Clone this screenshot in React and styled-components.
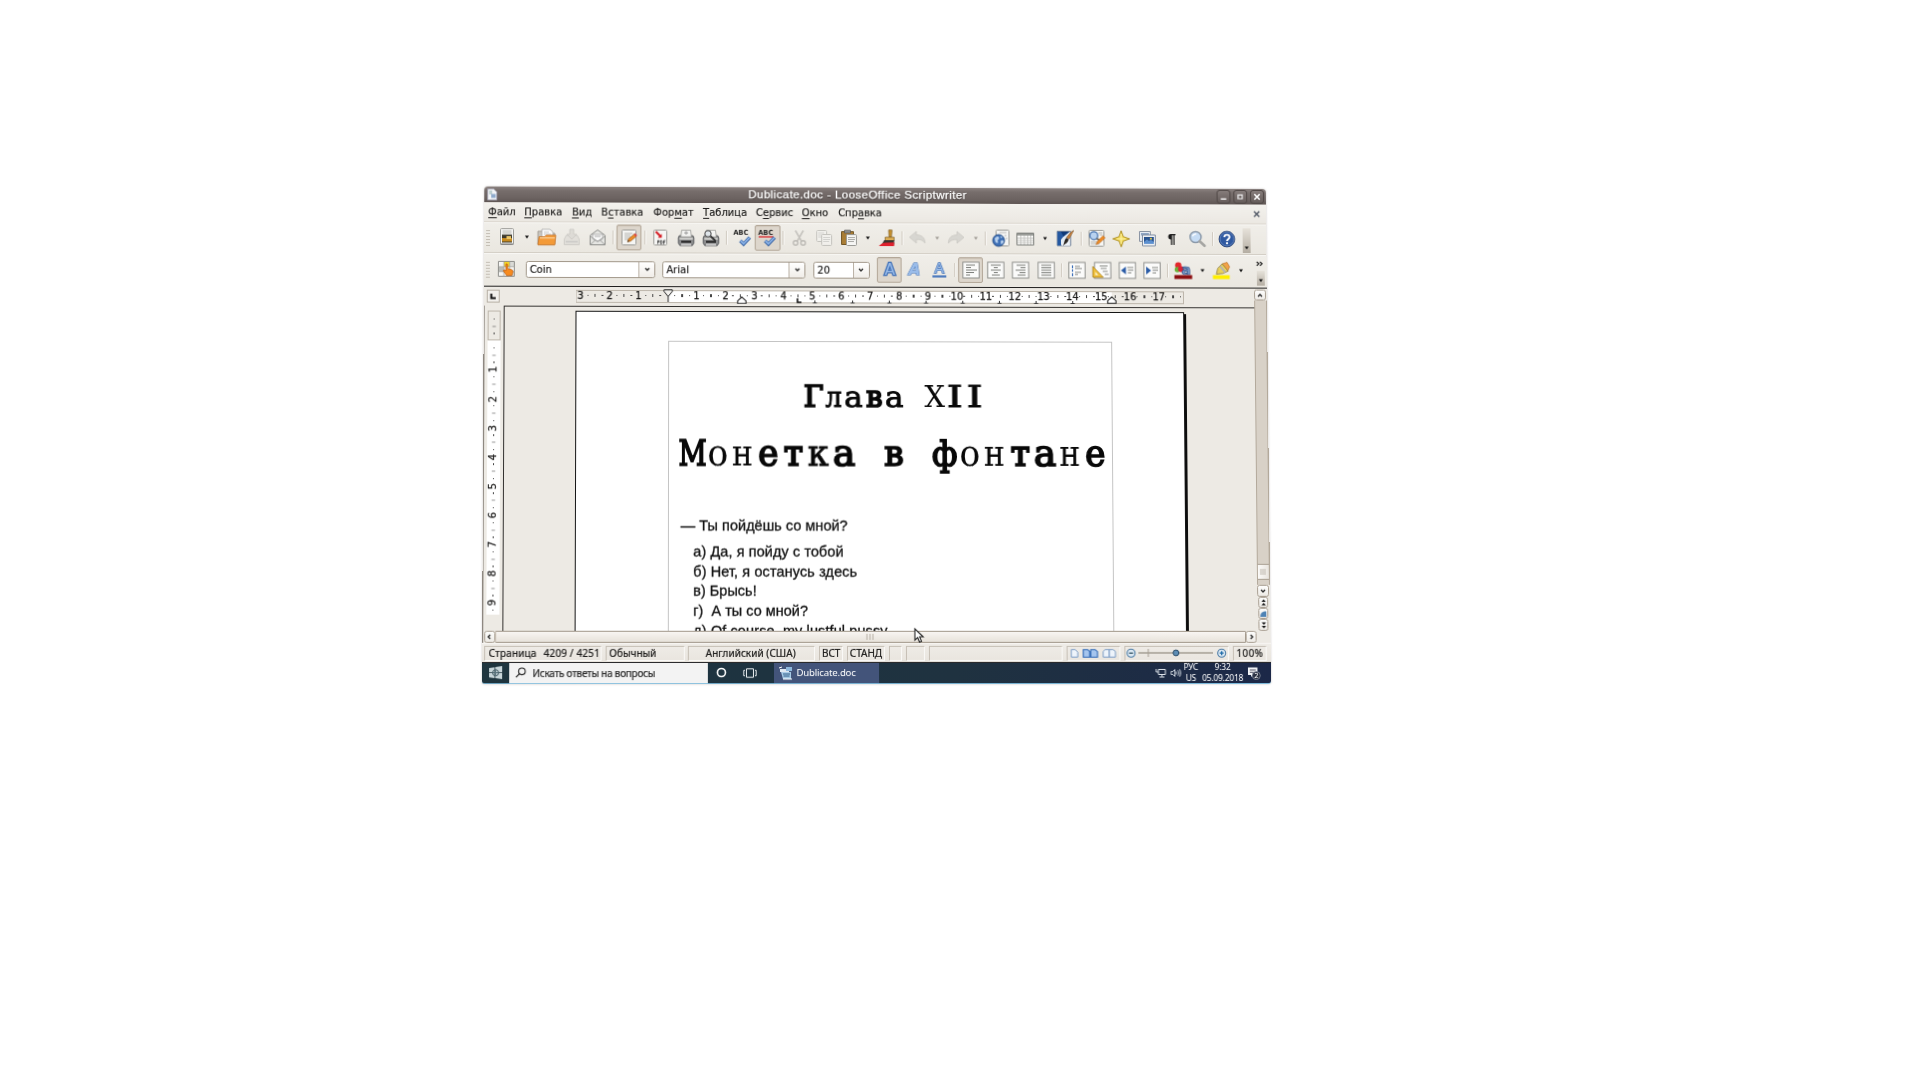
import React from "react";
import styled, { createGlobalStyle, css } from "styled-components";

const W = 789;
const H = 498;

/* The window stands slightly tilted: its four corners, relative to its own box. */
const corners = [
  [2.3, 0.5],
  [783.8, 3],
  [789, 498],
  [0, 498.2],
];

function tilt([[x0, y0], [x1, y1], [x2, y2], [x3, y3]]) {
  const dx1 = x1 - x2, dx2 = x3 - x2, dx3 = x0 - x1 + x2 - x3;
  const dy1 = y1 - y2, dy2 = y3 - y2, dy3 = y0 - y1 + y2 - y3;
  const det = dx1 * dy2 - dx2 * dy1;
  const g = (dx3 * dy2 - dx2 * dy3) / det;
  const h = (dx1 * dy3 - dx3 * dy1) / det;
  const m = [
    (x1 - x0 + g * x1) / W, (y1 - y0 + g * y1) / W, 0, g / W,
    (x3 - x0 + h * x3) / H, (y3 - y0 + h * y3) / H, 0, h / H,
    0, 0, 1, 0,
    x0, y0, 0, 1,
  ];
  return `matrix3d(${m.map((n) => n.toFixed(9)).join(",")})`;
}

const Global = createGlobalStyle`
  *, *::before, *::after { box-sizing: border-box; }
  html, body { margin: 0; background: #fff; }
  svg { display: block; flex: none; }
`;

const Stage = styled.div`
  width: 1920px;
  height: 1080px;
  padding: 186px 0 0 482px;
  overflow: hidden;
  background: #fff;
`;

const Window = styled.div`
  position: relative;
  width: ${W}px;
  height: ${H}px;
  display: flex;
  flex-direction: column;
  transform-origin: 0 0;
  transform: ${tilt(corners)};
  background: #edeae4;
  border-radius: 4px 4px 3px 3px;
  box-shadow: 0 0 2px rgba(60, 50, 45, 0.35);
  font-family: "DejaVu Sans", sans-serif;
  font-size: 10px;
  color: #1b1a19;
  white-space: nowrap;
`;

const TitleBar = styled.div`
  height: 15.5px;
  flex: none;
  display: flex;
  align-items: center;
  padding: 0 2px 0 3px;
  border-radius: 4px 4px 0 0;
  background: linear-gradient(#8b8280 0, #776e6c 25%, #6c6361 70%, #5f5654 100%);
`;
const Title = styled.div`
  flex: 1;
  text-align: center;
  padding: 0 0 3.4px 2px;
  font: 11.6px "Liberation Sans", Arial, sans-serif;
  letter-spacing: 0.43px;
  -webkit-text-stroke: 0.25px #fff;
  color: #fff;
  text-shadow: 0 1px 1px #3d3634;
`;
const WinButton = styled.div`
  width: 14px;
  height: 14px;
  margin-left: 2.8px;
  border-radius: 3px;
  border: 1px solid #4f4745;
  background: linear-gradient(#857c7a, #665d5b);
  display: grid;
  place-items: center;
`;

const MenuBar = styled.div`
  height: 20px;
  flex: none;
  display: flex;
  align-items: center;
  padding: 1px 6px 0 4.1px;
  border-bottom: 1px solid #dcd7cf;
  background: linear-gradient(#f3f1ed, #ebe8e2);
`;
const MenuItem = styled.div`
  width: ${(p) => p.$w}px;
  -webkit-text-stroke: 0.15px #1b1a19;
  u { text-underline-offset: 1.5px; text-decoration-thickness: 1px; }
`;
const Spring = styled.div`
  flex: 1;
`;

const ToolBar = styled.div`
  height: ${(p) => p.$h}px;
  flex: none;
  display: flex;
  align-items: center;
  border-top: 1px solid #f8f7f4;
  border-bottom: 1px solid ${(p) => (p.$last ? "#edeae4" : "#d3cec5")};
  background: linear-gradient(#f0eee9, #eae7e0);
`;
const Handle = styled.div`
  width: 4px;
  height: 17px;
  margin: 0 ${(p) => p.$r}px 0 2px;
  background: radial-gradient(circle, #c4beb4 0.6px, transparent 0.9px) 0 0 / 2px 3px;
`;
const Slot = styled.div`
  width: ${(p) => p.$w || 25.4}px;
  height: 26px;
  flex: none;
  display: grid;
  place-items: center;
  ${(p) => p.$dim && css`opacity: 0.5;`}
  ${(p) => p.$on && css`
    background: #ddd6cc;
    border: 1px solid #b3a798;
    border-radius: 2px;
    box-shadow: inset 0 1px 1px #cfc6ba;
  `}
`;
const Rule = styled.div`
  width: 1px;
  height: 14px;
  background: #d0cac0;
  box-shadow: 1px 0 0 #f9f8f6;
`;
const Overflow = styled.div`
  width: 8px;
  height: ${(p) => p.$h}px;
  margin-left: ${(p) => p.$l || 0}px;
  align-self: flex-end;
  margin-bottom: 1px;
  background: linear-gradient(#e6e2da, #b5aea3);
  display: grid;
  place-items: end center;
  padding-bottom: 3px;
`;
const EndStack = styled.div`
  width: 11px;
  height: 100%;
  margin-right: 1.6px;
  display: flex;
  flex-direction: column;
  align-items: center;
  justify-content: space-between;
  padding-top: 4.5px;
`;

const Combo = styled.div`
  width: ${(p) => p.$w}px;
  height: 17px;
  margin-right: ${(p) => p.$r}px;
  flex: none;
  display: flex;
  align-items: center;
  border: 1px solid #a19789;
  border-radius: 2.5px;
  background: #fff;
  padding-left: 3px;
  -webkit-text-stroke: 0.15px #1b1a19;
`;
const ComboText = styled.div`
  flex: 1;
`;
const ComboArrow = styled.div`
  width: 16px;
  height: 100%;
  border-left: 1px solid #b9b0a4;
  display: grid;
  place-items: center;
  background: linear-gradient(#fff, #f0ede8);
  border-radius: 0 2px 2px 0;
`;

const Work = styled.div`
  height: 345.3px;
  flex: none;
  display: flex;
  border-top: 1.3px solid #1e1d1c;
`;
const WorkMain = styled.div`
  width: 776px;
  display: flex;
  flex-direction: column;
`;
const RulerRow = styled.div`
  height: 19px;
  flex: none;
  display: flex;
  align-items: flex-start;
  padding: 3px 0 0 3px;
`;
const TabCorner = styled.div`
  width: 13px;
  height: 13px;
  margin-right: 76.4px;
  border: 1px solid #b6afa4;
  background: #f2f0ec;
  display: grid;
  place-items: center;
`;
const Ruler = styled.div`
  position: relative;
  width: 612.5px;
  height: 13px;
  display: flex;
  align-items: center;
  padding-bottom: 1.4px;
  border: 1px solid #bdb6ab;
  background: linear-gradient(90deg, #edeae4 0 92px, #fff 92px 539.5px, #edeae4 539.5px);
`;
const RulerSlot = styled.div`
  width: 7.285px;
  flex: none;
  display: flex;
  justify-content: center;
  font-size: 10px;
  line-height: 11px;
  -webkit-text-stroke: 0.25px #1b1a19;
`;
const Dot = styled.i`
  width: 1.3px;
  height: ${(p) => (p.$tall ? 3.4 : 1.4)}px;
  background: #444;
`;
const Marker = styled.div`
  position: absolute;
  left: ${(p) => p.$x}px;
  top: ${(p) => p.$y}px;
`;

const Below = styled.div`
  flex: 1;
  min-height: 0;
  display: flex;
`;
const SideRuler = styled.div`
  width: 19.7px;
  flex: none;
  border-left: 1.4px solid #8e8881;
  padding: 5.6px 0 0 3px;
`;
const SideScale = styled.div`
  width: 12.8px;
  height: 304px;
  display: flex;
  flex-direction: column;
  align-items: center;
  padding-top: 3.6px;
  background: linear-gradient(90deg, #bdb6ab 0 0.8px, transparent 0.8px 12px, #bdb6ab 12px) 0 0 / 100% 28px no-repeat,
    linear-gradient(#edeae4 0 28px, #bdb6ab 28px 28.8px, #fff 28.8px);
  border-top: 1px solid #bdb6ab;
`;
const SideSlot = styled.div`
  height: 7.285px;
  width: 12px;
  flex: none;
  display: flex;
  align-items: center;
  justify-content: center;
  line-height: 10px;
`;
const Turned = styled.span`
  transform: rotate(-90deg);
  -webkit-text-stroke: 0.25px #1b1a19;
`;
const Canvas = styled.div`
  flex: 1;
  min-width: 0;
  overflow: hidden;
  display: flex;
  align-items: flex-start;
  border-left: 1.5px solid #33312f;
  border-top: 1.3px solid #33312f;
  padding: 4.2px 0 0 70.9px;
  background: #edeae4;
`;
const Page = styled.div`
  width: 613px;
  height: 360px;
  flex: none;
  display: flex;
  padding: 29.4px 0 0 92.5px;
  background: #fff;
  border: 1.2px solid #141414;
  border-right-width: 1px;
  box-shadow: 2px 2px 0 #0c0c0c;
`;
const Frame = styled.div`
  width: 447px;
  flex: none;
  border: 1px solid #c4c4c4;
  border-bottom: 0;
`;
const Heading = styled.h1`
  display: flex;
  margin: ${(p) => p.$top}px 0 0 ${(p) => p.$left}px;
  height: ${(p) => p.$h}px;
  font: 400 ${(p) => p.$size}px / ${(p) => p.$h}px "DejaVu Serif", serif;
  color: #080808;
`;
const Letter = styled.span`
  display: flex;
  justify-content: center;
  width: ${(p) => p.$w}px;
  flex: none;
  white-space: pre;
  transform: scaleX(${(p) => p.$stretch || 1});
  -webkit-text-stroke: ${(p) => [0.1, 0.9, 1.7][p.$ink]}px #080808;
`;
const Line = styled.p`
  margin: ${(p) => p.$top || 0}px 0 0 ${(p) => p.$left}px;
  height: 19.8px;
  font: 14.5px / 19.8px "Liberation Sans", Arial, sans-serif;
  letter-spacing: ${(p) => p.$ls || 0}px;
  color: #111;
  -webkit-text-stroke: 0.3px #111;
  white-space: pre;
`;

const ScrollColumn = styled.div`
  width: 12.5px;
  margin-top: 1.4px;
  padding-bottom: 0.2px;
  display: flex;
  flex-direction: column;
`;
const ScrollButton = styled.div`
  width: ${(p) => p.$w || 12}px;
  height: ${(p) => p.$h || 11.5}px;
  flex: none;
  align-self: center;
  border: 1px solid #a99f92;
  border-radius: 2.5px;
  background: linear-gradient(#fdfdfc, #eeebe6);
  display: grid;
  place-items: center;
`;
const Track = styled.div`
  flex: 1;
  display: flex;
  flex-direction: column;
  justify-content: flex-end;
  padding-bottom: 5px;
  background: #d8d1c7;
  border: solid #b3a99b;
  border-width: 0 1px;
`;
const Thumb = styled.div`
  height: 16px;
  border: solid #a99f92;
  border-width: 1px 0;
  background: linear-gradient(90deg, #fbfaf8, #e9e5df);
  display: grid;
  place-items: center;
`;

const HScroll = styled.div`
  height: 12px;
  flex: none;
  display: flex;
  align-items: center;
  padding-left: 1px;
  border-left: 1.4px solid #8e8881;
`;
const HThumb = styled.div`
  flex: 1;
  height: 12px;
  padding-right: 3px;
  border: 1px solid #a1978a;
  border-left-color: #d2cabf;
  background: linear-gradient(#f8f5f2, #e7e2da);
  display: grid;
  place-items: center;
`;
const Corner = styled.div`
  width: 14px;
  flex: none;
`;

const StatusBar = styled.div`
  height: 18.7px;
  flex: none;
  display: flex;
  align-items: center;
  gap: 3.8px;
  padding: 1px 3px 0 2.2px;
  border-top: 1px solid #f7f5f2;
  background: linear-gradient(#efece7, #e9e5de);
  font: 10px "Noto Sans", "Open Sans", sans-serif;
`;
const StatusCell = styled.div`
  width: ${(p) => p.$w}px;
  height: 15px;
  flex: none;
  display: flex;
  align-items: center;
  gap: ${(p) => p.$gap || 0}px;
  justify-content: ${(p) => (p.$start ? "flex-start" : "center")};
  padding-left: ${(p) => p.$pl || 0}px;
  border: 1px solid;
  border-color: #c6bfb5 #faf9f7 #faf9f7 #c6bfb5;
  -webkit-text-stroke: 0.2px #1b1a19;
  letter-spacing: ${(p) => p.$ls || 0}px;
`;

const TaskBar = styled.div`
  flex: 1;
  min-height: 0;
  display: flex;
  align-items: stretch;
  border-top: 1px solid #2a2a2c;
  border-bottom: 1px solid #7ebbdc;
  border-radius: 0 0 3px 3px;
  background: linear-gradient(90deg, #1f353e, #1d3440 12%, #1f3240 60%, #1c2848);
  color: #fff;
  font: 9.6px "Noto Sans", "Open Sans", sans-serif;
`;
const Start = styled.div`
  width: 27.2px;
  display: grid;
  place-items: center;
`;
const Search = styled.div`
  width: 198.2px;
  display: flex;
  align-items: center;
  padding-left: 6px;
  gap: 6px;
  color: #2a2a2a;
  background: #f3f3f3;
  font-size: 10px;
  letter-spacing: -0.27px;
  -webkit-text-stroke: 0.2px #2a2a2a;
`;
const TaskIcon = styled.div`
  width: ${(p) => p.$w}px;
  display: grid;
  place-items: center;
`;
const TaskButton = styled.div`
  width: 105px;
  margin-left: 10px;
  display: flex;
  align-items: center;
  gap: 3.5px;
  padding-left: 5px;
  letter-spacing: -0.18px;
  background: #43547a;
`;
const Tray = styled.div`
  margin-left: auto;
  display: flex;
  align-items: center;
  padding-right: 9.6px;
`;
const TrayText = styled.div`
  width: ${(p) => p.$w}px;
  margin-left: ${(p) => p.$l}px;
  text-align: center;
  line-height: 10.4px;
  font-size: 8.4px;
  letter-spacing: -0.15px;
`;
const TrayIcon = styled.div`
  margin-left: ${(p) => p.$l || 0}px;
`;
const Pointer = styled.div`
  position: absolute;
  left: 431px;
  top: 442px;
`;

/* ---------- icons ---------- */
const Svg = ({ w = 18, h = 18, vb, children }) => (
  <svg width={w} height={h} viewBox={vb || `0 0 ${w} ${h}`} fill="none">{children}</svg>
);
const Caret = ({ c = "#111" }) => (
  <Svg w={6} h={4}><path d="M1 .5h4L3 3.4z" fill={c} /></Svg>
);
const Chevron = ({ r = 0, s = 6 }) => (
  <svg width={s} height={s} viewBox="0 0 6 6" fill="none">
    <path d="M1 2l2 2 2-2" stroke="#222" strokeWidth="1.3" transform={`rotate(${r} 3 3)`} />
  </svg>
);
const Sheet = ({ x = 2, y = 1, w = 14, h = 16 }) => (
  <rect x={x + 0.5} y={y + 0.5} width={w - 1} height={h - 1} rx="1" fill="#f6f6f4" stroke="#9b9b97" />
);

const NewDoc = () => (
  <Svg><Sheet y={0} h={17} /><path d="M4.5 3h9M4.5 5h9" stroke="#b5b5b0" /><path d="M4 6.5h10v8H4z" fill="#3e3a2c" /><path d="M4 10h10v3.5H4z" fill="#c78a1e" /><path d="M8.5 8h4.5v3H8.5z" fill="#eac568" /><path d="M2.5 16h13" stroke="#777" /></Svg>
);
const OpenFolder = () => (
  <Svg w={20} h={18}><path d="M1 16V3h5l1.5 2H18v11z" fill="#c9c6c0" stroke="#9c958a" strokeWidth=".8" /><path d="M5 1h8l3 2.5V10H5z" fill="#fafafa" stroke="#aaa" strokeWidth=".8" /><path d="M7 4h5M7 6h7" stroke="#bbb" strokeWidth=".8" /><path d="M1 16.8L2.2 8.5H8l1.3-1.6H19L18 16.8z" fill="#f39a38" stroke="#c4742a" strokeWidth=".8" /><path d="M3 9.7h15" stroke="#fbcb8e" strokeWidth="1.4" /></Svg>
);
const Save = () => (
  <Svg><path d="M1.5 11l2-4h11l2 4v5.5h-15z" fill="#d8d6d2" stroke="#a5a39f" strokeWidth=".8" /><path d="M7 1h4v5h3l-5 5-5-5h3z" fill="#cfcdc8" stroke="#a7a5a1" strokeWidth=".8" /><path d="M3 13.5h12" stroke="#aaa" strokeWidth="1.5" /></Svg>
);
const Mail = () => (
  <Svg><path d="M1.5 7L9 1.5 16.5 7v9.5h-15z" fill="#e6e6e3" stroke="#8c8d8a" strokeWidth="1" /><path d="M4 6h10v4.5l-5 3-5-3z" fill="#fafafa" stroke="#999" strokeWidth=".7" /><path d="M6 8h6" stroke="#aaa" /><path d="M1.7 8l7.3 5 7.3-5M1.8 16.3L7 11.5M16.2 16.3L11 11.5" stroke="#999a97" strokeWidth=".9" /></Svg>
);
const EditDoc = () => (
  <Svg><Sheet x={1} w={15} /><path d="M4 5h8M4 7h6M4 9h7M4 11h4" stroke="#b4b4b0" /><path d="M7 13.5l1.3-3.2 5.5-4.6 2 2.2-5.6 4.8z" fill="#ef8c26" stroke="#8c5a22" strokeWidth=".7" /><path d="M13.4 6l1.4-1.2 2 2.1-1.4 1.3z" fill="#d44" /><path d="M7 13.5l.9-1.7 1 1z" fill="#222" /></Svg>
);
const Pdf = () => (
  <Svg><Sheet /><path d="M4.5 3l5 5" stroke="#d41f26" strokeWidth="2.1" /><path d="M10.5 9.2V5.2L6.5 9.2z" fill="#d41f26" /><path d="M6.5 15.5v-3.5h1.3v1.6H6.5M9.3 15.3V12h.8c1.4 0 1.4 3.3 0 3.3zM12.5 15.7V12h1.8M12.5 13.7h1.4" stroke="#444" strokeWidth=".9" /></Svg>
);
const Printer = ({ lens }) => (
  <Svg><path d="M1.2 9l1-2h13.6l1 2v5.5L15.3 17H2.7l-1.5-2.5z" fill="#8b8c8d" stroke="#55575a" strokeWidth=".9" /><path d="M4.5 1.5h9l.8 6.8H3.7z" fill="#f4f4f2" stroke="#8c8c89" strokeWidth=".7" /><path d="M2.3 9.3h13.4v1.6H2.3z" fill="#dededb" /><path d="M4 13.2h10" stroke="#1d1d1d" strokeWidth="1.8" /><path d="M4 16h10" stroke="#e2e2e2" strokeWidth="1.4" />
    {lens ? <><circle cx="6" cy="5" r="3.2" fill="#dfe5ea" stroke="#444" /><path d="M8.5 7.5l5 4.5" stroke="#333" strokeWidth="1.8" /></> : <path d="M7 4.2h4M9 2.4v3.6" stroke="#999" />}
  </Svg>
);
const Abc = ({ line }) => (
  <Svg w={20} h={18}>
    <text x=".5" y="6.5" fontSize="7" fontWeight="700" fontFamily="DejaVu Sans" textLength="15" lengthAdjust="spacingAndGlyphs" fill="#222">ABC</text>
    {line && <path d="M1 8h15" stroke="#d8262c" strokeWidth="1.3" />}
    <path d="M7.5 12l3.3 3.3L17 8.6" stroke="#2b5aa0" strokeWidth="3.4" /><path d="M7.7 12l3.1 3 6-6.3" stroke="#8db4e8" strokeWidth="1.8" />
  </Svg>
);
const Cut = () => (
  <Svg><path d="M5 1.5l6.3 11M13 1.5L6.7 12.5" stroke="#9f9d99" strokeWidth="1.6" /><circle cx="5.2" cy="14" r="2.3" stroke="#8f8d89" strokeWidth="1.4" /><circle cx="12.8" cy="14" r="2.3" stroke="#8f8d89" strokeWidth="1.4" /></Svg>
);
const Copy = () => (
  <Svg><Sheet x={1} y={1} w={11} h={12} /><path d="M3 4h6M3 6h4M3 8h4" stroke="#bbb" /><Sheet x={6} y={5} w={11} h={12} /><path d="M8 8.5h7M8 10.5h7M8 12.5h6" stroke="#bbb" /></Svg>
);
const Paste = () => (
  <Svg><path d="M1.5 2.5h12v13h-12z" fill="#a97d35" stroke="#6f5322" /><path d="M4.5 1h6v3h-6z" fill="#8e8e8a" stroke="#555" strokeWidth=".6" /><Sheet x={6} y={5} w={11} h={12} /><path d="M8 8.5h7M8 10.5h7M8 12.5h6" stroke="#a9a9a5" /></Svg>
);
const Brush = () => (
  <Svg><path d="M11 .8h3.4l-.6 7h-2.4z" fill="#c9932f" stroke="#7d5a1c" strokeWidth=".7" /><path d="M7.5 8h9v3.5h-9z" fill="#dcae55" stroke="#7d5a1c" strokeWidth=".7" /><path d="M6.5 11h10v4.5H4z" fill="#39332f" /><path d="M1 17c3-3 5.5-4 9-3.5l6.5-.2V17z" fill="#e0202d" /></Svg>
);
const Undo = ({ flip }) => (
  <Svg><g transform={flip ? "translate(18 0) scale(-1 1)" : ""}><path d="M1 8l7-6v3.6c5 0 8.7 2.4 8.7 8.4-2-3.2-4.7-3.8-8.7-3.8V14z" fill="#c3c2be" stroke="#aaa8a3" strokeWidth=".8" /></g></Svg>
);
const Globe = () => (
  <Svg><Sheet x={4} y={0} w={14} h={17} /><path d="M8 3h7M13 6h2M14 9h2" stroke="#bbb" /><circle cx="7" cy="11" r="6" fill="#3d6fb5" stroke="#22477f" strokeWidth=".8" /><path d="M3 9c2-2.5 4-2.5 4.5-.7s-2.3 2-1.2 3.6-1.5 2.6-2.7.3zM9 11.5c2-1.4 3.4-.4 3 .9s-1.8 2.3-2.7 2.3zM8.5 6.5l2.5.8-1.5 1.4z" fill="#b7d0ee" /></Svg>
);
const Table = () => (
  <Svg><path d="M.5 3.5h17v12H.5z" fill="#fafaf8" stroke="#7d7f7b" /><path d="M1 4h16v2H1z" fill="#9a9c98" /><path d="M1 8.5h16M1 10.8h16M1 13.1h16M4.5 6v9M8 6v9M11.5 6v9M14.5 6v9" stroke="#bdbdb9" strokeWidth=".8" /></Svg>
);
const Draw = () => (
  <Svg><path d="M1.2 1.5h13.6v14.5H1.2z" fill="#e4ecf5" stroke="#6f8099" /><path d="M1.5 2h12L7 7.5 5 10v6H1.5z" fill="#2458a0" /><path d="M5 2h8.5L7.5 6.8C6.5 5 6 3.5 5 2z" fill="#0f3a78" /><path d="M6 13.5c3-1 5-3.5 8-9V16H6z" fill="#eef3f9" /><path d="M14.5 3L18 .5l-4.8 8.7-2.5-1.5z" fill="#c9823c" stroke="#7d5122" strokeWidth=".6" /><path d="M10.5 8.2l2.3 1.4c-.2 3-2.8 4.8-6 6.3 2-2.5 1.2-5.5 3.7-7.7z" fill="#2b2622" /></Svg>
);
const Find = () => (
  <Svg><Sheet x={1} y={0} w={16} h={17} /><path d="M3 12h7M3 14h9M11 3h4M12 5h3" stroke="#b4b4b0" /><circle cx="6.3" cy="5.8" r="4" fill="#b8d2f0" stroke="#4a76b0" strokeWidth="1.3" /><path d="M9 8.5l4.5 3" stroke="#666" strokeWidth="1.8" /><path d="M8.5 14.8l1.2-3L15.5 6l2.2 2-6 5.6z" fill="#ef8c26" stroke="#b45f14" strokeWidth=".6" /></Svg>
);
const Navigator = () => (
  <Svg><path d="M9 .8l2.2 6L17.5 9l-6.3 2.2L9 17.2l-2.2-6L.5 9l6.3-2.2z" fill="#f3d956" stroke="#a98a1c" strokeWidth=".9" strokeLinejoin="round" /><path d="M9 4v10M4.5 9h9" stroke="#fdf4ac" strokeWidth="1" /></Svg>
);
const Gallery = () => (
  <Svg><path d="M1.5 1.5h11v10h-11z" fill="#e6ebf2" stroke="#8a94a3" /><path d="M3 3h8v2.5H3z" fill="#8fa6c4" /><path d="M4.5 5h13v11h-13z" fill="#f4f5f7" stroke="#7d8ba0" /><path d="M6 7h10v7H6z" fill="#28538f" /><path d="M6 12l3-2.5 2 1.5 2-1 3 2v2H6z" fill="#5b8fcf" /><circle cx="13" cy="8.8" r="1" fill="#f2d64c" /></Svg>
);
const ZoomGlass = () => (
  <Svg><circle cx="7.3" cy="7" r="5.6" fill="#c6dcf4" stroke="#8b99a9" strokeWidth="1.5" /><path d="M4.3 6.3c.6-1.8 2-2.5 3.8-2.4" stroke="#fff" strokeWidth="1.2" /><path d="M11.5 11.2l4.8 4.6" stroke="#a5a5a2" strokeWidth="2.6" strokeLinecap="round" /></Svg>
);
const Help = () => (
  <Svg><circle cx="9" cy="9" r="7.9" fill="#2f59a1" stroke="#1d3a70" strokeWidth=".9" /><circle cx="9" cy="9" r="6.9" stroke="#6a8cc4" strokeWidth=".7" /><path d="M6.4 7c0-3.2 5.3-3.2 5.3 0 0 1.9-2.6 1.9-2.6 3.9" stroke="#fff" strokeWidth="1.9" /><circle cx="9.1" cy="13.2" r="1.1" fill="#fff" /></Svg>
);
const Styles = () => (
  <Svg><path d="M.5 1.5h16v15H.5z" fill="#f6f6f4" stroke="#8e8e8a" /><path d="M6 2h6v5H6z" fill="#f4d425" /><path d="M1 7h5v5H1z" fill="#b9bbb7" /><path d="M12 2h4v5h-4zM12 12h4v4h-4z" fill="#d9dad6" /><path d="M.5 6.8h16M.5 11.8h16M6 1.5v15M11.8 1.5v15" stroke="#a5a5a1" strokeWidth=".8" /><path d="M8 4.2c1.2-.6 1.8.2 1.8 1v3.5l4.2 1.2c1.3.5 1.2 2 .8 3.4l-.8 2.5H8.8L5.5 11c0-1.2 1.3-1.2 2.5 0z" fill="#f78b1f" stroke="#b9570c" strokeWidth=".7" /></Svg>
);
/* Glyph buttons: a light blue capital with a darker rim. */
const BigA = ({ slant, line }) => (
  <Svg>
    <text
      x="9" y={line ? 12 : 14.5} textAnchor="middle" fontSize={line ? 14 : 15.5}
      fontStyle={slant ? "italic" : "normal"} fontWeight={slant ? 700 : 400} fontFamily="DejaVu Sans"
      fill="#9abce9" stroke="#4473b8" strokeWidth={slant ? 0.9 : line ? 1.4 : 2.6} paintOrder="stroke"
    >A</text>
    {line && <path d="M2 15.5h14" stroke="#4a78bd" strokeWidth="2.2" />}
  </Svg>
);
const Align = ({ rows }) => (
  <Svg><rect x=".8" y="1" width="16.4" height="16" fill="#fbfbfa" stroke="#8d8e8a" />
    {rows.map(([a, b], i) => <path key={i} d={`M${a} ${4 + i * 2.5}H${b}`} stroke="#6b6d69" strokeWidth=".9" />)}
  </Svg>
);
const NumList = () => (
  <Svg><rect x=".8" y="1" width="16.4" height="16" fill="#fbfbfa" stroke="#8d8e8a" /><path d="M4.5 4v3M4.5 8v2.4M4.5 12v3" stroke="#3c6fb8" strokeWidth="1.2" /><path d="M7 5h5M7 7.2h7M7 11h6M7 13.2h3" stroke="#8a8c88" /></Svg>
);
const Bullets = () => (
  <Svg w={20} h={18}><rect x="2.8" y="1" width="16.4" height="16" fill="#fbfbfa" stroke="#8d8e8a" /><path d="M8 4.5h8M9 7h6M11 10h5M13 13h4" stroke="#8a8c88" /><path d="M1 5l10.5 11H1z" fill="#efc03c" stroke="#a87c14" strokeWidth=".8" /><path d="M3.5 10.5l3 3.2h-3z" fill="#fbf3d2" /></Svg>
);
const Indent = ({ out }) => (
  <Svg><rect x=".8" y="1" width="16.4" height="16" fill="#fbfbfa" stroke="#8d8e8a" /><path d={out ? "M7.5 5v8L2.5 9z" : "M3 5v8l5-4z"} fill="#2a5ba6" /><path d="M9 6h6M9.5 8.7h5.5M9.5 11.4h3.5" stroke="#777975" strokeWidth=".9" /></Svg>
);
const FontColor = () => (
  <Svg w={19} h={18}><circle cx="4.5" cy="3.8" r="3.2" fill="#e3262b" /><circle cx="3.6" cy="8" r="2.8" fill="#6bb43a" /><circle cx="7.2" cy="7.4" r="3" fill="#d23" /><text x="12.5" y="12.8" textAnchor="middle" fontSize="14" fontWeight="700" fontFamily="DejaVu Sans" fill="#7898c8" stroke="#2f4f86" strokeWidth=".7">a</text><path d="M.5 13.5h18v4H.5z" fill="#8c0f12" /></Svg>
);
const Highlight = () => (
  <Svg><path d="M10 2l5-1.5L17.5 5l-2 4.5z" fill="#f2a24a" stroke="#b5691c" strokeWidth=".6" /><path d="M4 12.5l1.5-6L10 2l6 7.3-5.5 2.5z" fill="#e9d15a" stroke="#8c7a3c" strokeWidth=".8" /><path d="M8 4.5l5 6" stroke="#b5b5b0" strokeWidth="2" /><path d="M.5 13.5h17v4H.5z" fill="#ffef00" /></Svg>
);

const R = {
  left: [[4, 13], [4, 9], [4, 15], [4, 12], [4, 8]],
  center: [[4, 14], [7, 11], [4, 14], [7, 11], [5, 13]],
  right: [[5, 14], [9, 14], [4, 14], [8, 14], [6, 14]],
  full: [[4, 14], [4, 14], [4, 14], [4, 14], [4, 14]],
};

const Sep = ({ w = 6.5 }) => <Slot $w={w}><Rule /></Slot>;

const ticks = (before, last) => {
  const out = [];
  for (let n = -before; n <= last; n++) out.push(n === 0 ? "" : Math.abs(n), ".", "|", ".");
  return out;
};

/* Typewriter headings: letter, ink weight, horizontal stretch. */
const ink1 = [["Г", 2, 1.05], ["л", 1, 0.9], ["а", 1, 1.08], ["в", 2, 1.02], ["а", 1, 1.08], [" ", 0], ["X", 0, 1], ["I", 1, 1.4], ["I", 1, 1.4]];
const ink2 = [
  ["М", 2, 0.8], ["о", 0, 1], ["н", 0, 0.92], ["е", 2, 1], ["т", 2, 1.04], ["к", 1, 0.98], ["а", 2, 1.1], [" ", 0], ["в", 2, 1.02], [" ", 0],
  ["ф", 2, 0.95], ["о", 0, 1], ["н", 0, 0.92], ["т", 2, 1.04], ["а", 2, 1.1], ["н", 0, 0.92], ["е", 2, 1],
];

const stops = [238.6, 276, 313.3, 350.3, 387.3, 424.5, 461.5, 498.5];

export default function App() {
  return (
    <Stage>
      <Global />
      <Window>
        <TitleBar>
          <Svg w={10} h={12}><path d="M.5.5h6l3 3v8h-9z" fill="#f3f5f7" stroke="#aab" strokeWidth=".8" /><path d="M2 3h3M2 5h3" stroke="#8aa" /><rect x="4" y="5.5" width="4.5" height="4" fill="#8fabcd" /></Svg>
          <Title>Dublicate.doc - LooseOffice Scriptwriter</Title>
          <WinButton><Svg w={8} h={8}><path d="M1.2 6.3h5.6" stroke="#fff" strokeWidth="1.4" /></Svg></WinButton>
          <WinButton><Svg w={8} h={8}><path d="M2 2.2h4v3.8H2z" stroke="#eee" strokeWidth="1.2" /></Svg></WinButton>
          <WinButton><Svg w={8} h={8}><path d="M1.3 1.3l5.4 5.4M6.7 1.3L1.3 6.7" stroke="#fff" strokeWidth="1.6" /></Svg></WinButton>
        </TitleBar>

        <MenuBar>
          <MenuItem $w={36.2}><u>Ф</u>айл</MenuItem>
          <MenuItem $w={47.9}><u>П</u>равка</MenuItem>
          <MenuItem $w={29.4}><u>В</u>ид</MenuItem>
          <MenuItem $w={52.5}>В<u>с</u>тавка</MenuItem>
          <MenuItem $w={50}>Фор<u>м</u>ат</MenuItem>
          <MenuItem $w={53.3}><u>Т</u>аблица</MenuItem>
          <MenuItem $w={46.2}>С<u>е</u>рвис</MenuItem>
          <MenuItem $w={36.6}><u>О</u>кно</MenuItem>
          <MenuItem $w={50}>Спр<u>а</u>вка</MenuItem>
          <Spring />
          <Svg w={7} h={7}><path d="M.8.8l5.4 5.4M6.2.8L.8 6.2" stroke="#4a5260" strokeWidth="1.3" /></Svg>
        </MenuBar>

        <ToolBar $h={31.5}>
          <Handle $r={4.5} />
          <Slot><NewDoc /></Slot><Slot $w={14.5}><Caret /></Slot>
          <Slot><OpenFolder /></Slot>
          <Slot $dim><Save /></Slot>
          <Slot><Mail /></Slot>
          <Sep />
          <Slot $w={25.2} $on><EditDoc /></Slot>
          <Sep />
          <Slot $w={25.2}><Pdf /></Slot><Slot><Printer /></Slot><Slot><Printer lens /></Slot>
          <Sep />
          <Slot $w={25}><Abc /></Slot><Slot $on><Abc line /></Slot>
          <Sep />
          <Slot $dim><Cut /></Slot><Slot $w={25} $dim><Copy /></Slot>
          <Slot $w={25}><Paste /></Slot><Slot $w={13}><Caret /></Slot>
          <Slot><Brush /></Slot>
          <Sep w={6} />
          <Slot $w={25} $dim><Undo /></Slot><Slot $w={14}><Caret c="#a09c95" /></Slot>
          <Slot $w={25} $dim><Undo flip /></Slot><Slot $w={14}><Caret c="#a09c95" /></Slot>
          <Sep w={6} />
          <Slot $w={25}><Globe /></Slot>
          <Slot $w={25.2}><Table /></Slot><Slot $w={14.4}><Caret /></Slot>
          <Slot><Draw /></Slot>
          <Sep />
          <Slot><Find /></Slot><Slot><Navigator /></Slot><Slot><Gallery /></Slot>
          <Slot><Svg><path d="M8 4h5v1.2h-1V15h-1.2V5.2H9.6V15H8.3V9.6C4.8 9.6 4.8 4 8 4z" fill="#1a1a1a" /></Svg></Slot>
          <Slot><ZoomGlass /></Slot>
          <Sep />
          <Slot $w={23}><Help /></Slot>
          <Overflow $h={25} $l={4.4}><Caret /></Overflow>
        </ToolBar>

        <ToolBar $h={32.6} $last>
          <Handle $r={4.3} />
          <Slot $w={25}><Styles /></Slot>
          <Slot $w={6.6} />
          <Combo $w={130.3} $r={7.1}><ComboText>Coin</ComboText><ComboArrow><Chevron /></ComboArrow></Combo>
          <Combo $w={144.2} $r={7.6}><ComboText>Arial</ComboText><ComboArrow><Chevron /></ComboArrow></Combo>
          <Combo $w={56.8} $r={7.4}><ComboText>20</ComboText><ComboArrow><Chevron /></ComboArrow></Combo>
          <Slot $w={24.9} $on><BigA /></Slot>
          <Slot $w={25}><BigA slant /></Slot>
          <Slot $w={25}><BigA line /></Slot>
          <Sep w={7} />
          <Slot $w={25} $on><Align rows={R.left} /></Slot>
          <Slot><Align rows={R.center} /></Slot>
          <Slot><Align rows={R.right} /></Slot>
          <Slot $w={25.2}><Align rows={R.full} /></Slot>
          <Sep w={6.2} />
          <Slot><NumList /></Slot><Slot $w={25.6}><Bullets /></Slot><Slot><Indent out /></Slot><Slot $w={25.2}><Indent /></Slot>
          <Sep w={6} />
          <Slot $w={25}><FontColor /></Slot><Slot $w={14.4}><Caret /></Slot>
          <Slot $w={24.4}><Highlight /></Slot><Slot $w={14.4}><Caret /></Slot>
          <Spring />
          <EndStack>
            <Svg w={8} h={6}><path d="M1 .8l2 2-2 2M4.3.8l2 2-2 2" stroke="#111" strokeWidth="1.2" /></Svg>
            <Overflow $h={15} $l={3}><Caret /></Overflow>
          </EndStack>
        </ToolBar>

        <Work>
          <WorkMain>
            <RulerRow>
              <TabCorner><Svg w={7} h={7}><path d="M1.5 1v4.5H6" stroke="#111" strokeWidth="2" /></Svg></TabCorner>
              <Ruler>
                {ticks(3, 17).map((t, i) => (
                  <RulerSlot key={i}>{t === "." ? <Dot /> : t === "|" ? <Dot $tall /> : t}</RulerSlot>
                ))}
                <Marker $x={86.8} $y={-1.4}><Svg w={10} h={13}><path d="M.8.8h8.4v1.5L5 7.5.8 2.3zM5 7.5V13" fill="#f4f2ee" stroke="#222" strokeWidth="1" /></Svg></Marker>
                <Marker $x={161} $y={5}><Svg w={10} h={8}><path d="M5 .8L9.2 4.7v2.5H.8V4.7z" fill="#fff" stroke="#222" strokeWidth="1.1" /></Svg></Marker>
                <Marker $x={533.6} $y={4.6}><Svg w={10} h={8}><path d="M5 .8L9.2 4.7v2.5H.8V4.7z" fill="#fff" stroke="#222" strokeWidth="1.1" /></Svg></Marker>
                <Marker $x={221} $y={7}><Svg w={6} h={5}><path d="M1 0v4h4" stroke="#111" strokeWidth="1.6" /></Svg></Marker>
                {stops.map((x) => (
                  <Marker key={x} $x={x - 1.5} $y={9.3}><Svg w={5} h={3}><path d="M.5 2.5h4M2.5 0v3" stroke="#333" /></Svg></Marker>
                ))}
              </Ruler>
            </RulerRow>
            <Below>
              <SideRuler>
                <SideScale>
                  {[".", "|", ".", ...ticks(0, 9).slice(0, 38)].map((t, i) => (
                    <SideSlot key={i}>{t === "." ? <Dot /> : t === "|" ? <Turned><Svg w={1} h={4}><path d="M.5 0v4" stroke="#333" /></Svg></Turned> : <Turned>{t}</Turned>}</SideSlot>
                  ))}
                </SideScale>
              </SideRuler>
              <Canvas>
                <Page>
                  <Frame>
                    <Heading $top={37} $left={134.8} $h={36} $size={29}>
                      {ink1.map(([c, k, s], i) => <Letter key={i} $w={20.3} $ink={k} $stretch={s}>{c}</Letter>)}
                    </Heading>
                    <Heading $top={17.8} $left={10.8} $h={43} $size={34.5}>
                      {ink2.map(([c, k, s], i) => <Letter key={i} $w={25.3} $ink={k} $stretch={s}>{c}</Letter>)}
                    </Heading>
                    <Line $top={40.7} $left={11.6} $ls={0.03}>— Ты пойдёшь со мной?</Line>
                    <Line $top={6.4} $left={24.2} $ls={0.08}>а) Да, я пойду с тобой</Line>
                    <Line $left={24.2} $ls={0.1}>б) Нет, я останусь здесь</Line>
                    <Line $left={24.2}>в) Брысь!</Line>
                    <Line $left={24.2}>г)  А ты со мной?</Line>
                    <Line $left={24.2} $ls={0.1}>д) Of course, my lustful pussy</Line>
                  </Frame>
                </Page>
              </Canvas>
            </Below>
          </WorkMain>
          <ScrollColumn>
            <ScrollButton><Chevron r={180} /></ScrollButton>
            <Track><Thumb><Svg w={6} h={6}><path d="M0 1h6M0 3h6M0 5h6" stroke="#b1a99e" strokeWidth=".8" /></Svg></Thumb></Track>
            <ScrollButton><Chevron /></ScrollButton>
            <ScrollButton $w={10} $h={11.3}><Svg w={5} h={7}><path d="M.3 3l2.2-2.6L4.7 3zM.3 6.6L2.5 4l2.2 2.6z" fill="#111" /></Svg></ScrollButton>
            <ScrollButton $w={10} $h={11.3}><Svg w={6} h={6}><path d="M0 6c0-4 2-5.5 6-5.5V6z" fill="#4e83b5" /></Svg></ScrollButton>
            <ScrollButton $w={10} $h={11.3}><Svg w={5} h={7}><path d="M.3.4h4.4L2.5 3zM.3 4h4.4L2.5 6.6z" fill="#111" /></Svg></ScrollButton>
          </ScrollColumn>
        </Work>

        <HScroll>
          <ScrollButton $w={10.5}><Chevron r={90} /></ScrollButton>
          <HThumb><Svg w={8} h={6}><path d="M1 0v6M4 0v6M7 0v6" stroke="#b1a99e" strokeWidth=".9" /></Svg></HThumb>
          <ScrollButton $w={11}><Chevron r={-90} /></ScrollButton>
          <Corner />
        </HScroll>

        <StatusBar>
          <StatusCell $w={116.6} $start $pl={3.4} $gap={7} $ls={0.12}><span>Страница</span><span>4209 / 4251</span></StatusCell>
          <StatusCell $w={79} $start $pl={3}>Обычный</StatusCell>
          <StatusCell $w={127} $start $pl={16.4} $ls={0.04}>Английский (США)</StatusCell>
          <StatusCell $w={24}>ВСТ</StatusCell>
          <StatusCell $w={38}>СТАНД</StatusCell>
          <StatusCell $w={13.2} />
          <StatusCell $w={19} />
          <StatusCell $w={134.5} />
          <StatusCell $w={54} $gap={4}>
            <Svg w={8} h={9}><path d="M.7.7h4l2.5 2.5v5H.7z" fill="#eef4fb" stroke="#7c9cc4" /></Svg>
            <Svg w={16} h={9}><path d="M.7.7h4.5l2 2v5.5H.7zM8.2.7h4.5l2.3 2v5.5H8.2z" fill="#a5c5ee" stroke="#2f68b5" strokeWidth="1.1" /></Svg>
            <Svg w={14} h={9}><path d="M.7 2.5l2-1.8h4v7.5h-6zM6.7.7h4l2.3 1.8v5.7H6.7z" fill="#eef4fb" stroke="#7c9cc4" /></Svg>
          </StatusCell>
          <StatusCell $w={105.5}>
            <Svg w={102} h={12}>
              <path d="M13 6h75" stroke="#a59e93" strokeWidth="1.4" /><path d="M23 2v8" stroke="#a59e93" />
              <circle cx="5.7" cy="6.2" r="4" fill="#dbe8f3" stroke="#4c7ba5" strokeWidth="1.1" /><path d="M3.7 6.2h4" stroke="#245" strokeWidth="1.2" />
              <circle cx="50.8" cy="6" r="2.9" fill="#5d8db5" stroke="#274a68" strokeWidth="1" />
              <circle cx="96.7" cy="6.2" r="4" fill="#dbe8f3" stroke="#4c7ba5" strokeWidth="1.1" /><path d="M94.7 6.2h4M96.7 4.2v4" stroke="#1d6aa8" strokeWidth="1.3" />
            </Svg>
          </StatusCell>
          <StatusCell $w={34} $ls={0.4}>100%</StatusCell>
        </StatusBar>

        <TaskBar>
          <Start><Svg w={13} h={13}><path d="M0 2l5.5-.8v5H0zM6.3 1.1L13 0v6.2H6.3zM0 7h5.5v5L0 11.2zM6.3 7H13v6l-6.7-1z" fill="#c9d6da" /><circle cx="6.5" cy="6.7" r="3" stroke="#3f5861" /><path d="M3.5 6.7h6M6.5 3.7v6" stroke="#5d7780" /></Svg></Start>
          <Search>
            <Svg w={11} h={11}><circle cx="6.7" cy="4.3" r="3.3" stroke="#222" strokeWidth="1.1" /><path d="M4.3 6.7L.8 10.2" stroke="#222" strokeWidth="1.2" /></Svg>
            Искать ответы на вопросы
          </Search>
          <TaskIcon $w={27}><Svg w={11} h={11}><circle cx="5.5" cy="5.5" r="4" stroke="#fff" strokeWidth="1.6" /></Svg></TaskIcon>
          <TaskIcon $w={28.6}><Svg w={14} h={10}><path d="M3.5.8h7v8.4h-7zM2 2.3H.8v5.4H2M12 2.3h1.2v5.4H12" stroke="#e8edef" /></Svg></TaskIcon>
          <TaskButton>
            <Svg w={14} h={14}><path d="M1 3h9v3H1z" fill="#dfe9f2" /><path d="M7 1h6v4H7z" fill="#8fb8dc" /><path d="M2 6h10v7H4z" fill="#a9cbe6" /><path d="M4 8h7M4.5 10h6" stroke="#2e5c86" /><path d="M0 2l3-1M4 13h9" stroke="#fff" /></Svg>
            Dublicate.doc
          </TaskButton>
          <Tray>
            <TrayIcon><Svg w={11} h={10}><path d="M3 1.5h7v5H3zM6.5 6.5v2.3M4 9h5M.8 1v3h2" stroke="#dde3ea" /></Svg></TrayIcon>
            <TrayIcon $l={3.4}><Svg w={11} h={10}><path d="M.8 3.5h1.7L4.5 1.5v7l-2-2H.8z" stroke="#dde3ea" strokeWidth=".9" /><path d="M6 3.5v3M7.7 2.3c1 1.7 1 3.7 0 5.4M9.3 1.3c1.4 2.3 1.4 5 0 7.4" stroke="#dde3ea" strokeWidth=".9" /></Svg></TrayIcon>
            <TrayText $w={18} $l={1}>РУС<br />US</TrayText>
            <TrayText $w={42} $l={2}>9:32<br />05.09.2018</TrayText>
            <TrayIcon $l={3.8}><Svg w={14} h={14}><path d="M1 1.5h9.5v7.5H6l-2 2V9H1z" fill="#f3f5f7" /><path d="M2.8 4h6M2.8 6.3h4" stroke="#556" /><circle cx="9.3" cy="9.6" r="4" fill="#2c3244" stroke="#8e97a8" strokeWidth=".7" /><text x="9.3" y="12.3" textAnchor="middle" fontSize="7.5" fontFamily="Noto Sans" fill="#fff">2</text></Svg></TrayIcon>
          </Tray>
        </TaskBar>

        <Pointer><Svg w={12} h={16}><path d="M1 1v11.2l2.7-2.5 1.9 4.6 2-.9-1.9-4.4h3.6z" fill="#fff" stroke="#222" strokeWidth="1.1" /></Svg></Pointer>
      </Window>
    </Stage>
  );
}
